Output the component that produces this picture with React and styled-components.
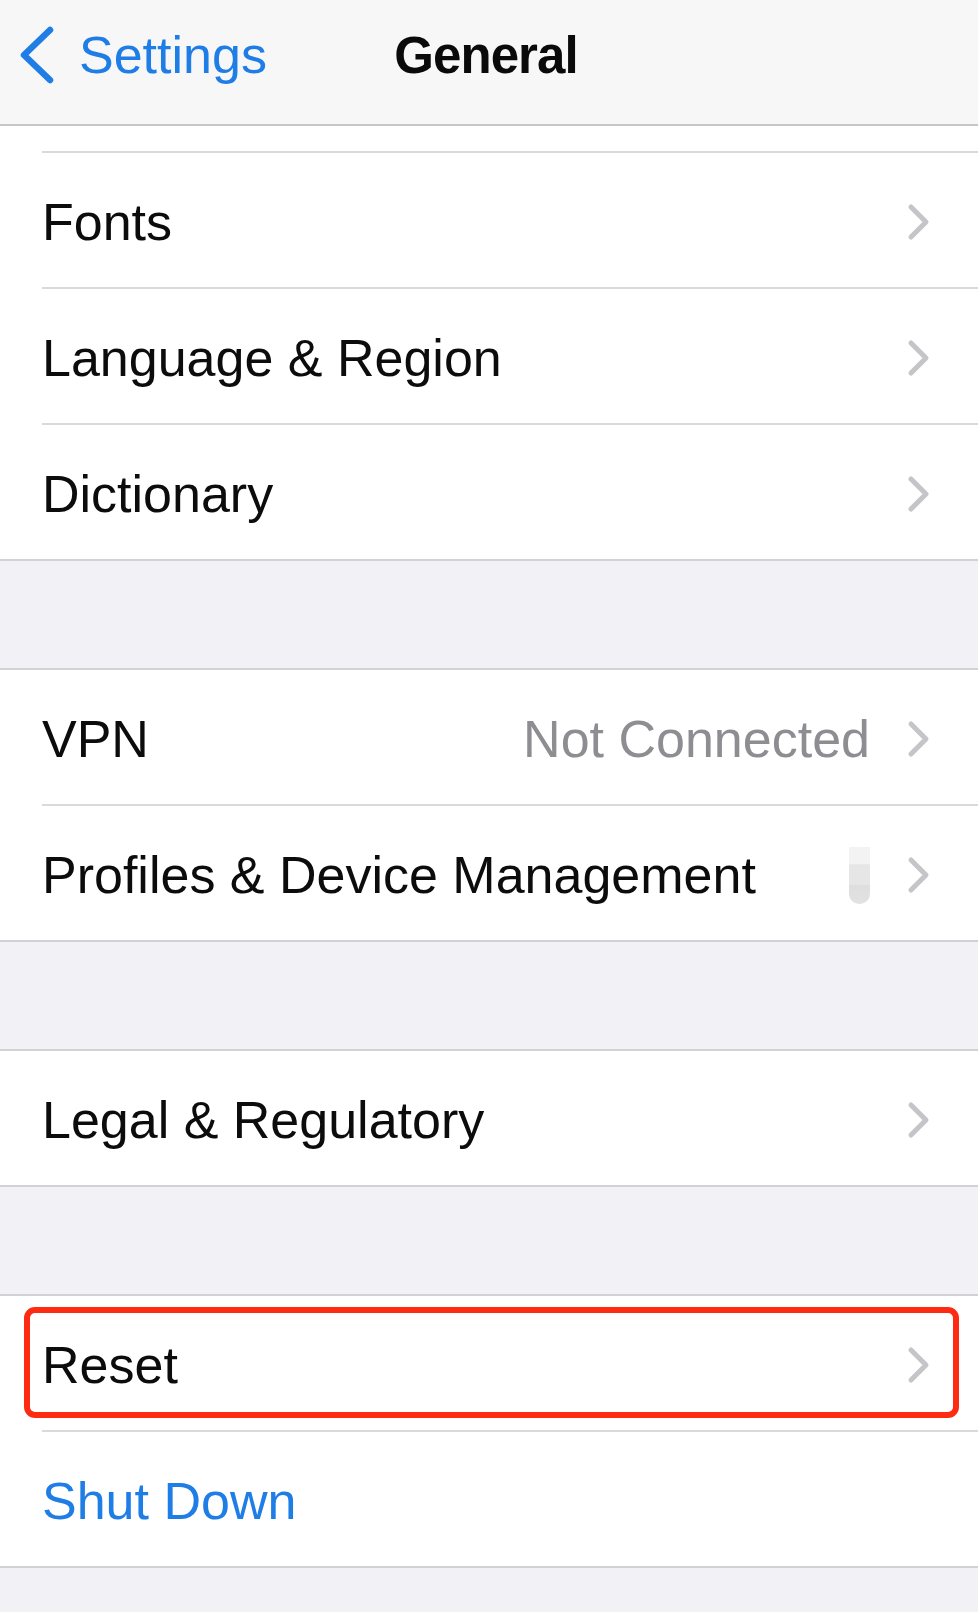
import React from "react";
import styled, { createGlobalStyle } from "styled-components";

const GlobalStyle = createGlobalStyle`
  html, body {
    margin: 0;
    padding: 0;
    background: #f1f1f6;
  }
  body {
    font-family: "Liberation Sans", Arial, sans-serif;
    -webkit-font-smoothing: antialiased;
  }
  * { box-sizing: border-box; }
`;

const Page = styled.div`
  width: 978px;
  min-height: 1612px;
  background: #f1f1f6;
  display: flex;
  flex-direction: column;
`;

const NavBar = styled.header`
  height: 126px;
  padding-bottom: 14px;
  background: #f7f7f7;
  border-bottom: 2px solid #c6c6c6;
  display: grid;
  grid-template-columns: 1fr auto 1fr;
  align-items: center;
`;

const BackButton = styled.div`
  display: flex;
  align-items: center;
  gap: 25px;
  padding-left: 18px;
  color: #1f7de6;
  font-size: 52px;
  line-height: 1;
`;

const Title = styled.div`
  font-size: 51px;
  font-weight: 700;
  line-height: 1;
  letter-spacing: -0.9px;
  color: #0a0a0a;
  margin-right: 6px;
`;

const Group = styled.section`
  background: #ffffff;
  border-top: ${(p) => (p.$noTop ? "none" : "2px solid #d2d2d4")};
  border-bottom: 2px solid #d2d2d4;
  margin-top: ${(p) => p.$gap || 0}px;
`;

const RowOuter = styled.div`
  position: relative;
  padding-left: 42px;
`;

const RowInner = styled.div`
  height: ${(p) => (p.$last ? 134 : 136)}px;
  border-bottom: ${(p) => (p.$last ? "none" : "2px solid #dadadc")};
  padding-right: 47px;
  padding-top: 3px;
  display: flex;
  align-items: center;
  gap: 37px;
`;

const Stub = styled.div`
  margin-left: 42px;
  height: 27px;
  border-bottom: 2px solid #dadadc;
`;

const Label = styled.div`
  flex: 1;
  font-size: 52px;
  line-height: 1;
  color: ${(p) => (p.$action ? "#1f7de6" : "#0c0c0c")};
  white-space: nowrap;
`;

const Value = styled.div`
  font-size: 52px;
  line-height: 1;
  color: #8d8d92;
  white-space: nowrap;
`;

const Redacted = styled.div`
  width: 21px;
  height: 57px;
  margin-top: 2px;
  border-radius: 0 0 10px 10px;
  background: linear-gradient(
    to bottom,
    #f3f3f3 0%,
    #f3f3f3 30%,
    #e6e6e6 31%,
    #e6e6e6 66%,
    #dedede 67%,
    #e2e2e2 100%
  );
`;

const Highlight = styled.div`
  position: absolute;
  left: 24px;
  right: 19px;
  top: 11px;
  bottom: 14px;
  border: 6px solid #ff2a12;
  border-radius: 11px;
  pointer-events: none;
`;

const BackChevron = () => (
  <svg width="36" height="58" viewBox="0 0 36 58" fill="none">
    <path
      d="M32 4 L6 29 L32 54"
      stroke="#1f7de6"
      strokeWidth="6.5"
      strokeLinecap="round"
      strokeLinejoin="round"
    />
  </svg>
);

const Chevron = () => (
  <svg width="24" height="38" viewBox="0 0 24 38" fill="none">
    <path
      d="M4 4 L19 19 L4 34"
      stroke="#c5c5c9"
      strokeWidth="5"
      strokeLinecap="round"
      strokeLinejoin="round"
    />
  </svg>
);

const Row = ({ label, value, redacted, last, action, chevron = true, highlight }) => (
  <RowOuter>
    <RowInner $last={last}>
      <Label $action={action}>{label}</Label>
      {value && <Value>{value}</Value>}
      {redacted && <Redacted />}
      {chevron && <Chevron />}
    </RowInner>
    {highlight && <Highlight />}
  </RowOuter>
);

export default function App() {
  return (
    <>
      <GlobalStyle />
      <Page>
        <NavBar>
          <BackButton>
            <BackChevron />
            <span>Settings</span>
          </BackButton>
          <Title>General</Title>
          <div />
        </NavBar>

        <Group $noTop>
          <Stub />
          <Row label="Fonts" />
          <Row label="Language & Region" />
          <Row label="Dictionary" last />
        </Group>

        <Group $gap={107}>
          <Row label="VPN" value="Not Connected" />
          <Row label="Profiles & Device Management" redacted last />
        </Group>

        <Group $gap={107}>
          <Row label="Legal & Regulatory" last />
        </Group>

        <Group $gap={107}>
          <Row label="Reset" highlight />
          <Row label="Shut Down" action chevron={false} last />
        </Group>
      </Page>
    </>
  );
}
